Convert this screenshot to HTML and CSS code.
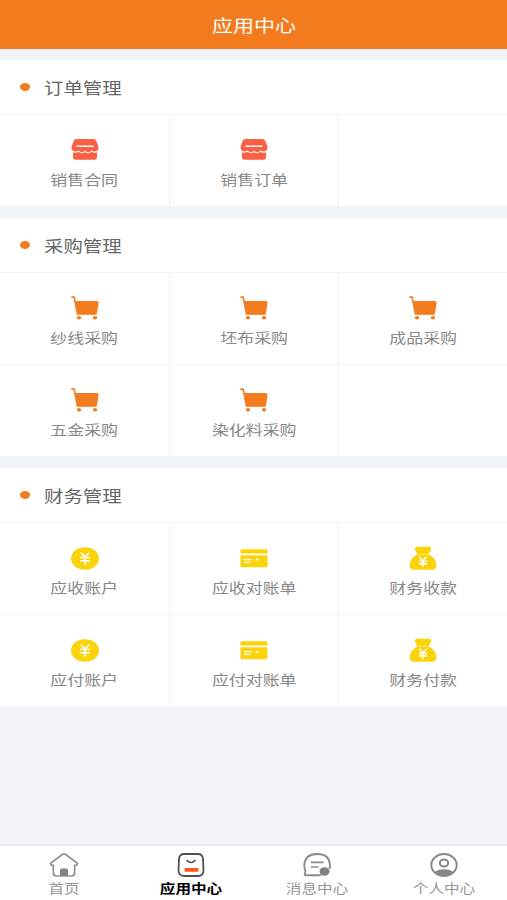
FILE: index.html
```html
<!DOCTYPE html>
<html lang="zh-CN">
<head>
<meta charset="utf-8">
<title>应用中心</title>
<link rel="stylesheet" href="styles.css">
</head>
<body>
<svg class="sprite" width="0" height="0" aria-hidden="true">
  <symbol id="shop" viewBox="0 0 28 24">
    <path fill="#fb6044" d="M5.500 1h17Q24.600 1 25.300 3L27.400 8.500Q28 13 24 13.500Q22 13.500 20.500 12.500Q19 14.500 17 14.200Q15 14 14 12.500Q13 14.500 11 14.200Q9 14 7.500 12.500Q6 13.500 4 13.500Q0 13 .6 8.500L2.700 3Q3.400 1 5.500 1z"/>
    <path fill="#fb6044" d="M2 14.200Q5 15.400 7.500 13.800Q10.500 16.600 14 14.100Q17.500 16.600 20.500 13.800Q23 15.400 26 14.200V19.500Q26 21.700 23.500 21.700H4.500Q2 21.700 2 19.500z"/>
    <path stroke="#fff" stroke-width="1.500" stroke-linecap="round" d="M6 8.200h16"/>
  </symbol>
  <symbol id="cart" viewBox="0 0 28 24">
    <path fill="none" stroke="#f37c1e" stroke-width="1.700" stroke-linecap="round" stroke-linejoin="round" d="M1 1.200h2.200L6.500 18H25"/>
    <path fill="#f37c1e" d="M4.500 5H25.500Q28 5 27.500 7.500L26.300 15.500Q26 18.300 23.500 18.300H6.800z"/>
    <ellipse fill="#f37c1e" cx="8" cy="21.700" rx="2.200" ry="1.700"/>
    <ellipse fill="#f37c1e" cx="24" cy="21.700" rx="2.200" ry="1.700"/>
  </symbol>
  <symbol id="coin" viewBox="0 0 28 24">
    <ellipse fill="#fbd30b" cx="14" cy="12.500" rx="14" ry="11.300"/>
    <path fill="none" stroke="#fff" stroke-width="1.600" d="M9.800 6.500L14 11l4.200-4.500M9 11.500h10M9 14.700h10M14 11v8"/>
  </symbol>
  <symbol id="card" viewBox="0 0 28 24">
    <path fill="#fbd30b" d="M2 3.300h24q1.500 0 1.500 1.500v2.800H.5V4.800q0-1.500 1.500-1.500zM.5 9.300h27v10.500q0 1.500-1.500 1.500H2q-1.500 0-1.500-1.500z"/>
    <path stroke="#fff" stroke-width="1.200" fill="none" d="M4 13.700h8M4 16.300h6.500M15.500 14.200l1.500-1 2 1"/>
  </symbol>
  <symbol id="bag" viewBox="0 0 28 24">
    <path fill="#fbd30b" d="M8.500.5Q11.300 1 14 .5Q16.700 1 19.500.5Q22.300.8 22 3.500Q21.500 6.500 19.300 8.300Q27.300 12 27.300 19.500Q27.300 23.800 22.500 23.800H5.500Q.7 23.800.7 19.500Q.7 12 8.700 8.300Q6.500 6.500 6 3.500Q5.700.8 8.500.5z"/>
    <path fill="none" stroke="#fff3a0" stroke-width=".7" d="M9 8.400h10"/>
    <path fill="none" stroke="#fff" stroke-width="1.500" d="M10.300 11L14 15l3.700-4M10 15.500h8M10 18h8M14 15v6"/>
  </symbol>
</svg>

<header class="topbar"><h1 class="wide">应用中心</h1></header>

<main class="content">
  <section class="group">
    <h2 class="group-title"><i class="dot"></i><span class="wide">订单管理</span></h2>
    <div class="grid">
      <a class="cell"><svg class="icon"><use href="#shop"/></svg><span class="wide">销售合同</span></a>
      <a class="cell"><svg class="icon"><use href="#shop"/></svg><span class="wide">销售订单</span></a>
    </div>
  </section>

  <section class="group">
    <h2 class="group-title"><i class="dot"></i><span class="wide">采购管理</span></h2>
    <div class="grid">
      <a class="cell"><svg class="icon"><use href="#cart"/></svg><span class="wide">纱线采购</span></a>
      <a class="cell"><svg class="icon"><use href="#cart"/></svg><span class="wide">坯布采购</span></a>
      <a class="cell"><svg class="icon"><use href="#cart"/></svg><span class="wide">成品采购</span></a>
      <a class="cell"><svg class="icon"><use href="#cart"/></svg><span class="wide">五金采购</span></a>
      <a class="cell"><svg class="icon"><use href="#cart"/></svg><span class="wide">染化料采购</span></a>
    </div>
  </section>

  <section class="group">
    <h2 class="group-title"><i class="dot"></i><span class="wide">财务管理</span></h2>
    <div class="grid">
      <a class="cell"><svg class="icon"><use href="#coin"/></svg><span class="wide">应收账户</span></a>
      <a class="cell"><svg class="icon"><use href="#card"/></svg><span class="wide">应收对账单</span></a>
      <a class="cell"><svg class="icon"><use href="#bag"/></svg><span class="wide">财务收款</span></a>
      <a class="cell"><svg class="icon"><use href="#coin"/></svg><span class="wide">应付账户</span></a>
      <a class="cell"><svg class="icon"><use href="#card"/></svg><span class="wide">应付对账单</span></a>
      <a class="cell"><svg class="icon"><use href="#bag"/></svg><span class="wide">财务付款</span></a>
    </div>
  </section>
</main>

<nav class="tabbar">
  <a class="tab">
    <svg class="tab-icon" viewBox="0 0 30 26">
      <path fill="none" stroke="#929292" stroke-width="1.700" stroke-linejoin="round" d="M15 1.800Q15.800 1.800 17 2.700L28 11Q29.200 13 26.500 13.300H25.700V21Q25.700 24 22.500 24H7.500Q4.300 24 4.300 21V13.300H3.500Q.8 13 2 11L13 2.700Q14.200 1.800 15 1.800z"/>
      <path fill="#858585" d="M11 24v-6q0-1.500 1.500-1.500h5q1.500 0 1.500 1.500v6z"/>
    </svg>
    <span class="wide">首页</span>
  </a>
  <a class="tab active">
    <svg class="tab-icon" viewBox="0 0 30 26">
      <path fill="none" stroke="#505050" stroke-width="1.800" d="M8 2h14Q26.500 2 27 7L27.500 18Q27.500 24 22 24H8Q2.500 24 2.500 18L3 7Q3.500 2 8 2z"/>
      <path fill="none" stroke="#505050" stroke-width="1.700" stroke-linecap="round" d="M11 8.500Q15 12.500 19 8.500"/>
      <rect fill="#fb5b17" x="8.500" y="16" width="14" height="3.700" rx="1.200"/>
    </svg>
    <span class="wide">应用中心</span>
  </a>
  <a class="tab">
    <svg class="tab-icon" viewBox="0 0 30 26">
      <path fill="none" stroke="#8c8c8c" stroke-width="1.900" stroke-linejoin="round" d="M19 23.300H3.500Q2.300 23.300 2.700 22L3.500 19.500Q2.300 16.500 2.300 13Q3 2 15 2Q27 2 27.800 12V17"/>
      <path stroke="#8c8c8c" stroke-width="1.700" stroke-linecap="round" d="M9.500 10.300h11.500M9.500 15h6.500"/>
      <ellipse fill="#808080" cx="22.500" cy="19.500" rx="5" ry="4.200"/>
    </svg>
    <span class="wide">消息中心</span>
  </a>
  <a class="tab">
    <svg class="tab-icon" viewBox="0 0 30 26">
      <ellipse fill="none" stroke="#888" stroke-width="1.900" cx="15" cy="13" rx="12.700" ry="11"/>
      <ellipse fill="none" stroke="#888" stroke-width="2" cx="15" cy="11" rx="4.200" ry="3.500"/>
      <path fill="#858585" d="M6 20Q8.500 17.300 15 17.300Q21.500 17.300 24 20Q20.500 24 15 24Q9.500 24 6 20z"/>
    </svg>
    <span class="wide">个人中心</span>
  </a>
</nav>
</body>
</html>
```
FILE: styles.css
```css
* {
  box-sizing: border-box;
}

body {
  display: flex;
  flex-direction: column;
  height: 100vh;
  margin: 0;
  overflow: hidden;
  background: #f0f4f8;
  font-family: "Noto Sans CJK SC", sans-serif;
  font-weight: 400;
}

.sprite {
  position: absolute;
}

/* Extended letterforms used throughout the app */
.wide {
  display: inline-block;
  transform: scaleX(1.2);
  white-space: nowrap;
}

.topbar {
  display: flex;
  flex: none;
  align-items: center;
  justify-content: center;
  height: 49px;
  background: #f37b1d;
}

.topbar h1 {
  margin: 0;
  color: #fff;
  font-size: 17.5px;
  font-weight: 400;
  line-height: 24px;
}

.content {
  flex: 1;
  padding-top: 11px;
}

.group {
  margin-bottom: 11px;
  background: #fff;
}

.group-title {
  display: flex;
  align-items: center;
  height: 55px;
  margin: 0;
  padding-left: 20px;
  border-bottom: 1px solid #f3f4f5;
  color: #666;
  font-size: 16.2px;
  font-weight: 400;
}

.group-title .wide {
  margin-left: 13.5px;
  transform-origin: left;
}

.dot {
  width: 10px;
  height: 8px;
  border-radius: 50%;
  background: #f37b1d;
}

/* Row rules run the full width, even across empty cells */
.grid {
  display: grid;
  grid-template-columns: 170px 169px 1fr;
  grid-auto-rows: 92px;
  background: linear-gradient(#f3f4f5, #f3f4f5 1px, transparent 1px) 0 -1px / 100% 92px repeat-y;
}

.cell {
  display: flex;
  flex-direction: column;
  align-items: center;
  padding-top: 23px;
  border-right: 1px solid #f1f2f4;
  color: #888;
  font-size: 14.1px;
  line-height: 20px;
}

.cell:nth-child(3n) {
  border-right: 0;
}

.icon {
  flex: none;
  width: 28px;
  height: 24px;
  margin-bottom: 7px;
}

.tabbar {
  display: grid;
  flex: none;
  grid-template-columns: repeat(4, 1fr);
  height: 56px;
  padding-left: 1px;
  border-top: 2px solid #e9edf0;
  background: #fff;
}

.tab {
  display: flex;
  flex-direction: column;
  align-items: center;
  padding-top: 6px;
  color: #979797;
  font-size: 13px;
  line-height: 19px;
}

.tab-icon {
  flex: none;
  width: 30px;
  height: 26px;
}

.tab.active {
  color: #000;
  font-weight: 700;
}
```
